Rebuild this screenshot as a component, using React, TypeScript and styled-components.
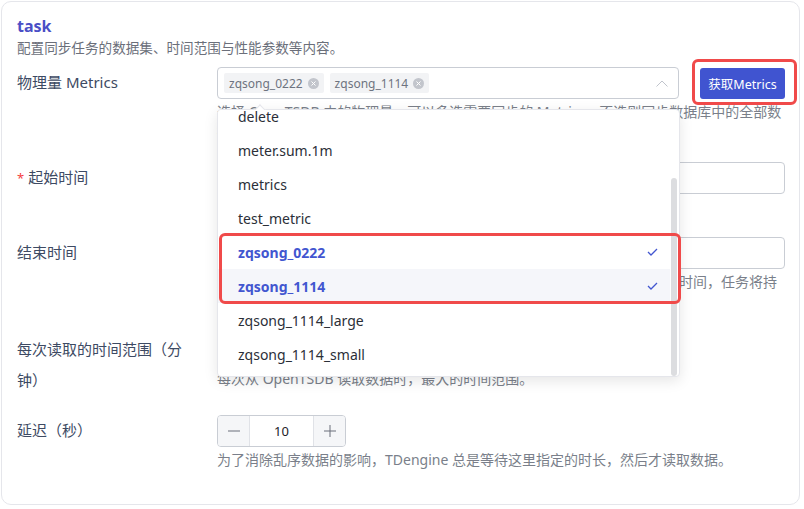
import React from 'react'
import styled, { createGlobalStyle } from 'styled-components'

const GlobalStyle = createGlobalStyle`
  html, body {
    margin: 0;
    padding: 0;
    background: #fff;
  }
  body {
    font-family: "Noto Sans", "Noto Sans CJK SC", sans-serif;
  }
  * {
    box-sizing: border-box;
  }
`

const Card = styled.div`
  margin: 1px 0 0 1px;
  width: 799px;
  height: 504px;
  border: 1px solid #e5e6eb;
  border-radius: 10px;
  padding: 13px 14px 0 15px;
  background: #fff;
`

const Title = styled.div`
  font-size: 16px;
  line-height: 22px;
  font-weight: 700;
  color: #4a4fc6;
`

const Desc = styled.div`
  font-family: "Noto Sans CJK SC", sans-serif;
  font-size: 13.6px;
  line-height: 20px;
  color: #6b6f7a;
  margin-bottom: 10px;
`

const FormItem = styled.div<{ $space?: number }>`
  display: grid;
  grid-template-columns: 200px 1fr;
  margin-bottom: ${(p) => p.$space ?? 20}px;
`

const Label = styled.div`
  font-family: "Noto Sans", "Noto Sans CJK SC", sans-serif;
  font-size: 15px;
  line-height: 31px;
  color: #3d4a63;
  width: 180px;
`

const Star = styled.span`
  color: #f53f3f;
  font-size: 13px;
  margin-right: 4px;
`

const Control = styled.div`
  min-width: 0;
`

const Help = styled.div`
  font-family: "Noto Sans", "Noto Sans CJK SC", sans-serif;
  font-size: 14px;
  line-height: 20px;
  color: #7a7f8a;
  margin-top: 3px;
`

const ControlRow = styled.div`
  display: flex;
  align-items: center;
  gap: 21px;
`

const SelectWrap = styled.div`
  position: relative;
  flex: 1;
  z-index: 10;
`

const SelectBox = styled.div`
  height: 32px;
  border: 1px solid #c9cdd4;
  border-radius: 4px;
  display: flex;
  align-items: center;
  padding: 0 10px 0 6px;
  background: #fff;
`

const Tag = styled.span`
  display: inline-flex;
  align-items: center;
  gap: 5px;
  height: 20px;
  padding: 0 5px;
  margin-right: 6px;
  background: #f2f3f5;
  border-radius: 2px;
  font-size: 12px;
  color: #6e7380;
`

const TagClose = styled.span`
  width: 11px;
  height: 11px;
  border-radius: 50%;
  background: #c2c5cc;
  display: inline-flex;
  align-items: center;
  justify-content: center;
`

const Chevron = styled.svg`
  margin-left: auto;
`

const Dropdown = styled.div`
  position: absolute;
  top: 42px;
  left: 0;
  width: 463px;
  height: 268px;
  background: #fff;
  border: 1px solid #e5e6eb;
  border-radius: 4px;
  box-shadow: 0 4px 14px rgba(0, 0, 0, 0.1);

  &::before {
    content: '';
    position: absolute;
    top: -4px;
    left: 38px;
    width: 7px;
    height: 7px;
    background: #fff;
    border-left: 1px solid #e5e6eb;
    border-top: 1px solid #e5e6eb;
    transform: rotate(45deg);
  }
`

const OptionViewport = styled.div`
  position: relative;
  height: 100%;
  overflow: hidden;
  border-radius: 4px;
`

const OptionList = styled.div`
  margin-top: -11px;
  margin-right: 9px;
`

const Option = styled.div<{ $selected?: boolean; $hover?: boolean }>`
  height: 34px;
  display: flex;
  align-items: center;
  justify-content: space-between;
  padding: 0 12px 0 20px;
  font-size: 14px;
  color: ${(p) => (p.$selected ? '#4256d0' : '#2b2f38')};
  font-weight: ${(p) => (p.$selected ? 700 : 400)};
  background: ${(p) => (p.$hover ? '#f5f6fa' : '#fff')};
`

const ScrollThumb = styled.div`
  position: absolute;
  right: 2px;
  top: 68px;
  width: 6px;
  height: 198px;
  border-radius: 3px;
  background: #dcdde0;
`

const Highlight = styled.div`
  position: absolute;
  border: 3px solid #f04a4a;
  border-radius: 6px;
  pointer-events: none;
  z-index: 20;
`

const OptionHighlight = styled(Highlight)`
  top: 166px;
  left: 2px;
  width: 462px;
  height: 71px;
`

const ButtonWrap = styled.div`
  position: relative;
`

const ButtonHighlight = styled(Highlight)`
  top: -9px;
  left: -8px;
  right: -12px;
  bottom: -6px;
`

const PrimaryButton = styled.button`
  display: block;
  width: 85px;
  height: 31px;
  border: none;
  border-radius: 3px;
  background: #4054d0;
  color: #fff;
  font-family: "Noto Sans", "Noto Sans CJK SC", sans-serif;
  font-size: 12.5px;
  font-weight: 400;
  padding: 0;
  cursor: pointer;
`

const Input = styled.div`
  height: 32px;
  border: 1px solid #c9cdd4;
  border-radius: 4px;
  background: #fff;
`

const Stepper = styled.div`
  display: flex;
  width: 129px;
  height: 32px;
  border: 1px solid #c9cdd4;
  border-radius: 4px;
  overflow: hidden;
`

const StepButton = styled.div<{ $side: 'left' | 'right' }>`
  width: 32px;
  background: #f5f6f8;
  display: flex;
  align-items: center;
  justify-content: center;
  border-${(p) => (p.$side === 'left' ? 'right' : 'left')}: 1px solid #e0e2e7;
`

const StepValue = styled.div`
  flex: 1;
  display: flex;
  align-items: center;
  justify-content: center;
  font-size: 13px;
  color: #1d2129;
`

const CheckIcon = () => (
  <svg width="11" height="8" viewBox="0 0 11 8" fill="none">
    <path d="M1 4 L4 7 L10 1" stroke="#4256d0" strokeWidth="1.3" />
  </svg>
)

const CloseIcon = () => (
  <svg width="5" height="5" viewBox="0 0 5 5">
    <path d="M0.5 0.5 L4.5 4.5 M4.5 0.5 L0.5 4.5" stroke="#fff" strokeWidth="1" />
  </svg>
)

const NumberInput = ({ value }: { value: number }) => (
  <Stepper>
    <StepButton $side="left">
      <svg width="12" height="12" viewBox="0 0 12 12">
        <path d="M0 6 H12" stroke="#6b6f7a" strokeWidth="1" />
      </svg>
    </StepButton>
    <StepValue>{value}</StepValue>
    <StepButton $side="right">
      <svg width="12" height="12" viewBox="0 0 12 12">
        <path d="M0 6 H12 M6 0 V12" stroke="#6b6f7a" strokeWidth="1" />
      </svg>
    </StepButton>
  </Stepper>
)

const options = [
  'delete',
  'meter.sum.1m',
  'metrics',
  'test_metric',
  'zqsong_0222',
  'zqsong_1114',
  'zqsong_1114_large',
  'zqsong_1114_small',
]
const selected = ['zqsong_0222', 'zqsong_1114']

export default function App() {
  return (
    <>
      <GlobalStyle />
      <Card>
        <Title>task</Title>
        <Desc>配置同步任务的数据集、时间范围与性能参数等内容。</Desc>

        <FormItem>
          <Label>物理量 Metrics</Label>
          <Control>
            <ControlRow>
              <SelectWrap>
                <SelectBox>
                  {selected.map((s) => (
                    <Tag key={s}>
                      {s}
                      <TagClose>
                        <CloseIcon />
                      </TagClose>
                    </Tag>
                  ))}
                  <Chevron width="12" height="7" viewBox="0 0 12 7" fill="none">
                    <path d="M0.5 6.5 L6 1 L11.5 6.5" stroke="#c0c4cc" strokeWidth="1" />
                  </Chevron>
                </SelectBox>
                <Dropdown>
                  <OptionViewport>
                    <OptionList>
                      {options.map((o) => (
                        <Option
                          key={o}
                          $selected={selected.includes(o)}
                          $hover={o === 'zqsong_1114'}
                        >
                          {o}
                          {selected.includes(o) && <CheckIcon />}
                        </Option>
                      ))}
                    </OptionList>
                    <ScrollThumb />
                  </OptionViewport>
                </Dropdown>
                <OptionHighlight />
              </SelectWrap>
              <ButtonWrap>
                <PrimaryButton>获取Metrics</PrimaryButton>
                <ButtonHighlight />
              </ButtonWrap>
            </ControlRow>
            <Help>
              选择 OpenTSDB 中的物理量，可以多选需要同步的 Metrics，不选则同步数据库中的全部数据。
            </Help>
          </Control>
        </FormItem>

        <FormItem>
          <Label>
            <Star>*</Star>起始时间
          </Label>
          <Control>
            <Input />
            <Help>同步数据的起始时间。</Help>
          </Control>
        </FormItem>

        <FormItem $space={22}>
          <Label>结束时间</Label>
          <Control>
            <Input />
            <Help>
              结束时间可以不填写。如果不填写结束时间，则任务会一直同步数据到当前时间，任务将持续运行。
            </Help>
          </Control>
        </FormItem>

        <FormItem $space={19}>
          <Label>每次读取的时间范围（分钟）</Label>
          <Control>
            <NumberInput value={60} />
            <Help>每次从 OpenTSDB 读取数据时，最大的时间范围。</Help>
          </Control>
        </FormItem>

        <FormItem>
          <Label>延迟（秒）</Label>
          <Control>
            <NumberInput value={10} />
            <Help>为了消除乱序数据的影响，TDengine 总是等待这里指定的时长，然后才读取数据。</Help>
          </Control>
        </FormItem>
      </Card>
    </>
  )
}
